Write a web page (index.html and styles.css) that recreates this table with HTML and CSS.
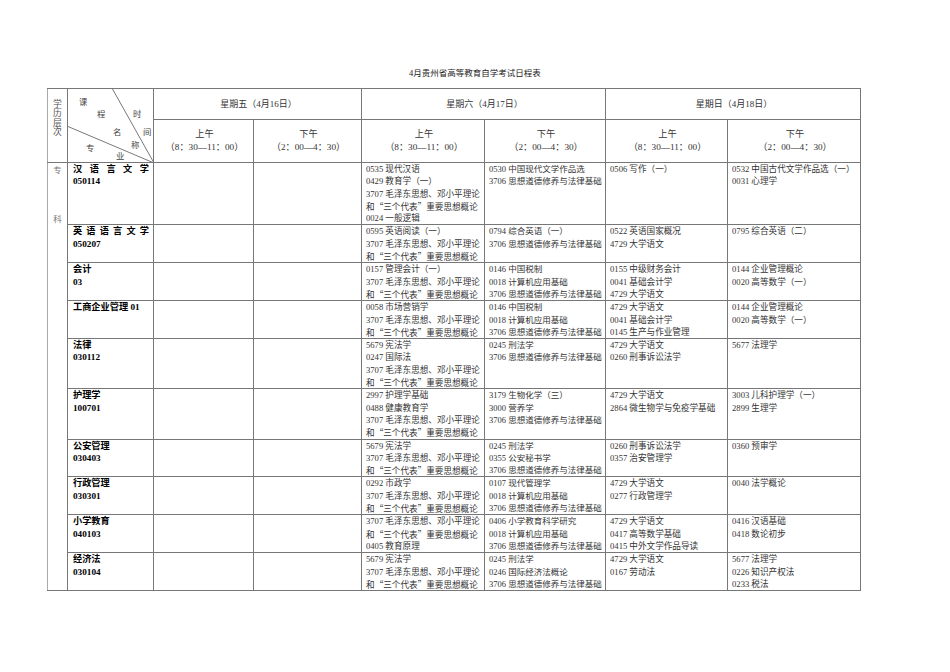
FILE: index.html
```html
<!DOCTYPE html>
<html lang="zh-CN">
<head>
<meta charset="utf-8">
<title>4月贵州省高等教育自学考试日程表</title>
<link rel="stylesheet" href="styles.css">
</head>
<body>
<div class="title">4月贵州省高等教育自学考试日程表</div>
<table class="sched">
  <colgroup>
    <col class="c1"><col class="c2"><col class="c3"><col class="c4">
    <col class="c5"><col class="c6"><col class="c7"><col class="c8">
  </colgroup>
  <tr class="hr1">
    <td rowspan="2" class="level-head"><div class="vtext"><span>学</span><span>历</span><span>层</span><span>次</span></div></td>
    <td rowspan="2" class="diag">
      <div class="diag-box">
        <svg class="diag-lines" width="86" height="74" viewBox="0 0 86 74">
          <line x1="44.5" y1="0" x2="86" y2="74" stroke="#555" stroke-width="0.8"/>
          <line x1="0" y1="37.5" x2="86" y2="74" stroke="#555" stroke-width="0.8"/>
        </svg>
        <span class="dl" style="left:11px;top:9px">课</span>
        <span class="dl" style="left:29px;top:21px">程</span>
        <span class="dl" style="left:65px;top:21px">时</span>
        <span class="dl" style="left:45px;top:39px">名</span>
        <span class="dl" style="left:75px;top:39px">间</span>
        <span class="dl" style="left:63px;top:52px">称</span>
        <span class="dl" style="left:18px;top:55px">专</span>
        <span class="dl" style="left:48px;top:63px">业</span>
      </div>
    </td>
    <td colspan="2" class="day">星期五（4月16日）</td>
    <td colspan="2" class="day">星期六（4月17日）</td>
    <td colspan="2" class="day">星期日（4月18日）</td>
  </tr>
  <tr class="hr2">
    <td class="slot">上午<br>（8：30—11：00）</td>
    <td class="slot">下午<br>（2：00—4：30）</td>
    <td class="slot">上午<br>（8：30—11：00）</td>
    <td class="slot">下午<br>（2：00—4：30）</td>
    <td class="slot">上午<br>（8：30—11：00）</td>
    <td class="slot">下午<br>（2：00—4：30）</td>
  </tr>

  <tr>
    <td rowspan="10" class="level"><div class="level-in"><span>专</span><span>科</span></div></td>
    <td class="major"><div class="spread"><span>汉</span><span>语</span><span>言</span><span>文</span><span>学</span></div><div>050114</div></td>
    <td></td><td></td>
    <td class="cell c5t"><div>0535 现代汉语</div><div>0429 教育学（一）</div><div>3707 毛泽东思想、邓小平理论</div><div>和<span class="q">“</span>三个代表<span class="q">”</span>重要思想概论</div><div>0024 一般逻辑</div></td>
    <td class="cell c6t"><div>0530 中国现代文学作品选</div><div>3706 思想道德修养与法律基础</div></td>
    <td class="cell"><div>0506 写作（一）</div></td>
    <td class="cell"><div>0532 中国古代文学作品选（一）</div><div>0031 心理学</div></td>
  </tr>
  <tr>
    <td class="major"><div class="spread"><span>英</span><span>语</span><span>语</span><span>言</span><span>文</span><span>学</span></div><div>050207</div></td>
    <td></td><td></td>
    <td class="cell c5t"><div>0595 英语阅读（一）</div><div>3707 毛泽东思想、邓小平理论</div><div>和<span class="q">“</span>三个代表<span class="q">”</span>重要思想概论</div></td>
    <td class="cell c6t"><div>0794 综合英语（一）</div><div>3706 思想道德修养与法律基础</div></td>
    <td class="cell"><div>0522 英语国家概况</div><div>4729 大学语文</div></td>
    <td class="cell"><div>0795 综合英语（二）</div></td>
  </tr>
  <tr>
    <td class="major"><div>会计</div><div>03</div></td>
    <td></td><td></td>
    <td class="cell c5t"><div>0157 管理会计（一）</div><div>3707 毛泽东思想、邓小平理论</div><div>和<span class="q">“</span>三个代表<span class="q">”</span>重要思想概论</div></td>
    <td class="cell c6t"><div>0146 中国税制</div><div>0018 计算机应用基础</div><div>3706 思想道德修养与法律基础</div></td>
    <td class="cell"><div>0155 中级财务会计</div><div>0041 基础会计学</div><div>4729 大学语文</div></td>
    <td class="cell"><div>0144 企业管理概论</div><div>0020 高等数学（一）</div></td>
  </tr>
  <tr>
    <td class="major"><div>工商企业管理 01</div></td>
    <td></td><td></td>
    <td class="cell c5t"><div>0058 市场营销学</div><div>3707 毛泽东思想、邓小平理论</div><div>和<span class="q">“</span>三个代表<span class="q">”</span>重要思想概论</div></td>
    <td class="cell c6t"><div>0146 中国税制</div><div>0018 计算机应用基础</div><div>3706 思想道德修养与法律基础</div></td>
    <td class="cell"><div>4729 大学语文</div><div>0041 基础会计学</div><div>0145 生产与作业管理</div></td>
    <td class="cell"><div>0144 企业管理概论</div><div>0020 高等数学（一）</div></td>
  </tr>
  <tr>
    <td class="major"><div>法律</div><div>030112</div></td>
    <td></td><td></td>
    <td class="cell c5t"><div>5679 宪法学</div><div>0247 国际法</div><div>3707 毛泽东思想、邓小平理论</div><div>和<span class="q">“</span>三个代表<span class="q">”</span>重要思想概论</div></td>
    <td class="cell c6t"><div>0245 刑法学</div><div>3706 思想道德修养与法律基础</div></td>
    <td class="cell"><div>4729 大学语文</div><div>0260 刑事诉讼法学</div></td>
    <td class="cell"><div>5677 法理学</div></td>
  </tr>
  <tr>
    <td class="major"><div>护理学</div><div>100701</div></td>
    <td></td><td></td>
    <td class="cell c5t"><div>2997 护理学基础</div><div>0488 健康教育学</div><div>3707 毛泽东思想、邓小平理论</div><div>和<span class="q">“</span>三个代表<span class="q">”</span>重要思想概论</div></td>
    <td class="cell c6t"><div>3179 生物化学（三）</div><div>3000 营养学</div><div>3706 思想道德修养与法律基础</div></td>
    <td class="cell"><div>4729 大学语文</div><div>2864 微生物学与免疫学基础</div></td>
    <td class="cell"><div>3003 儿科护理学（一）</div><div>2899 生理学</div></td>
  </tr>
  <tr>
    <td class="major"><div>公安管理</div><div>030403</div></td>
    <td></td><td></td>
    <td class="cell c5t"><div>5679 宪法学</div><div>3707 毛泽东思想、邓小平理论</div><div>和<span class="q">“</span>三个代表<span class="q">”</span>重要思想概论</div></td>
    <td class="cell c6t"><div>0245 刑法学</div><div>0355 公安秘书学</div><div>3706 思想道德修养与法律基础</div></td>
    <td class="cell"><div>0260 刑事诉讼法学</div><div>0357 治安管理学</div></td>
    <td class="cell"><div>0360 预审学</div></td>
  </tr>
  <tr>
    <td class="major"><div>行政管理</div><div>030301</div></td>
    <td></td><td></td>
    <td class="cell c5t"><div>0292 市政学</div><div>3707 毛泽东思想、邓小平理论</div><div>和<span class="q">“</span>三个代表<span class="q">”</span>重要思想概论</div></td>
    <td class="cell c6t"><div>0107 现代管理学</div><div>0018 计算机应用基础</div><div>3706 思想道德修养与法律基础</div></td>
    <td class="cell"><div>4729 大学语文</div><div>0277 行政管理学</div></td>
    <td class="cell"><div>0040 法学概论</div></td>
  </tr>
  <tr>
    <td class="major"><div>小学教育</div><div>040103</div></td>
    <td></td><td></td>
    <td class="cell c5t"><div>3707 毛泽东思想、邓小平理论</div><div>和<span class="q">“</span>三个代表<span class="q">”</span>重要思想概论</div><div>0405 教育原理</div></td>
    <td class="cell c6t"><div>0406 小学教育科学研究</div><div>0018 计算机应用基础</div><div>3706 思想道德修养与法律基础</div></td>
    <td class="cell"><div>4729 大学语文</div><div>0417 高等数学基础</div><div>0415 中外文学作品导读</div></td>
    <td class="cell"><div>0416 汉语基础</div><div>0418 数论初步</div></td>
  </tr>
  <tr>
    <td class="major"><div>经济法</div><div>030104</div></td>
    <td></td><td></td>
    <td class="cell c5t"><div>5679 宪法学</div><div>3707 毛泽东思想、邓小平理论</div><div>和<span class="q">“</span>三个代表<span class="q">”</span>重要思想概论</div></td>
    <td class="cell c6t"><div>0245 刑法学</div><div>0246 国际经济法概论</div><div>3706 思想道德修养与法律基础</div></td>
    <td class="cell"><div>4729 大学语文</div><div>0167 劳动法</div></td>
    <td class="cell"><div>5677 法理学</div><div>0226 知识产权法</div><div>0233 税法</div></td>
  </tr>
</table>
</body>
</html>
```

FILE: styles.css
```css
html, body {
  margin: 0;
  padding: 0;
  background: #fff;
}
body {
  font-family: "Liberation Serif", "Noto Sans CJK SC", serif;
  color: #333;
  width: 950px;
}
.title {
  text-align: center;
  font-size: 8.5px;
  line-height: 14px;
  padding-top: 66px;
  margin-bottom: 8px;
  color: #222;
}
.sched {
  border-collapse: collapse;
  table-layout: fixed;
  width: 813px;
  margin-left: 47px;
  font-size: 8.6px;
  line-height: 12.3px;
}
.c1 { width: 20px; }
.c2 { width: 86px; }
.c3 { width: 100px; }
.c4 { width: 108px; }
.c5 { width: 123px; }
.c6 { width: 121px; }
.c7 { width: 122px; }
.c8 { width: 133px; }
.sched td {
  border: 1px solid #777;
  padding: 0 2px 0 4px;
  vertical-align: top;
  white-space: nowrap;
  overflow: hidden;
}
.hr1 td { height: 30px; }
.hr2 td { height: 42px; }
.day {
  text-align: center;
  vertical-align: middle !important;
  font-size: 9px;
  color: #333;
}
.slot {
  text-align: center;
  vertical-align: middle !important;
  font-size: 9.2px;
  line-height: 13.2px;
  color: #333;
}
.sched td.level-head {
  padding: 0;
  border-left-color: #aaa;
}
.vtext {
  display: flex;
  flex-direction: column;
  align-items: center;
  padding-top: 11px;
  line-height: 9.4px;
  font-size: 8.8px;
  color: #555;
}
.sched td.diag {
  padding: 0;
}
.diag-box {
  position: relative;
  height: 73px;
}
.diag-lines {
  position: absolute;
  left: 0;
  top: 0;
}
.dl {
  position: absolute;
  font-size: 8.4px;
  line-height: 9px;
  color: #444;
}
.sched td.level {
  padding: 0;
  border-left-color: #aaa;
  border-bottom-color: #777;
}
.level-in {
  display: flex;
  flex-direction: column;
  align-items: center;
  justify-content: space-between;
  height: 61px;
  padding-top: 2px;
  color: #777;
  font-size: 8.4px;
}
.sched td.major {
  padding: 0 4px 0 5px;
  font-weight: bold;
  color: #000;
  font-size: 9.2px;
}
.major > div,
.cell > div {
  height: 12.3px;
}
.spread {
  display: flex;
  justify-content: space-between;
}
.cell {
  color: #333;
}
.q {
  font-family: "Noto Sans CJK SC", sans-serif;
}
.c6t {
  font-size: 8.5px;
}
```
